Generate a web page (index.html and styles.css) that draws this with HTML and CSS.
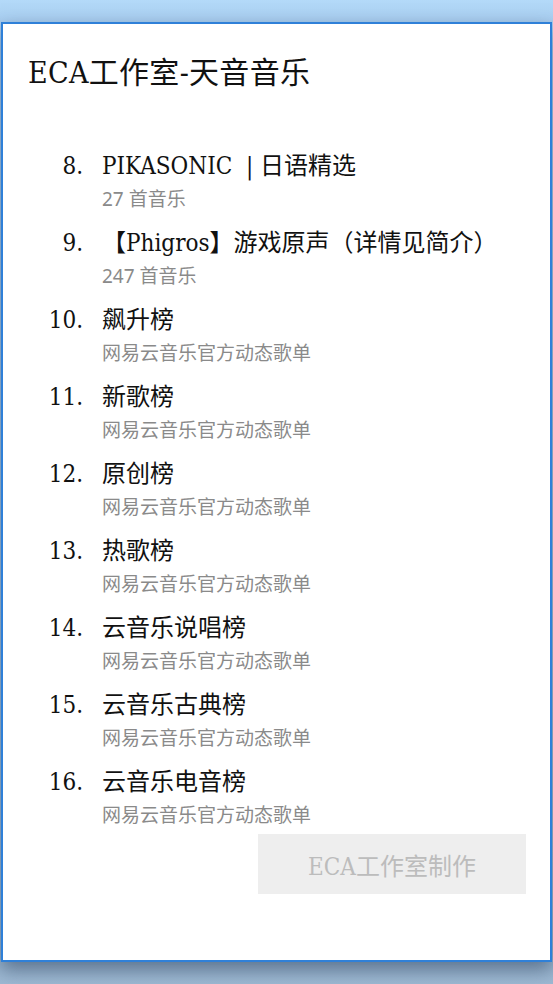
FILE: index.html
```html
<!DOCTYPE html>
<html lang="zh-CN">
<head>
    <meta charset="UTF-8">
    <meta name="viewport" content="width=device-width, initial-scale=1.0">
    <title>ECA工作室-天音音乐</title>
    <link rel="stylesheet" href="styles.css">
</head>
<body>

    <div class="window">
        <main class="panel">
            <h1 class="panel-title">ECA工作室-天音音乐</h1>

            <ul class="playlist">
                <li class="playlist-item">
                    <span class="num">8.</span>
                    <div class="info">
                        <div class="name">PIKASONIC&nbsp; | 日语精选</div>
                        <div class="desc">27 首音乐</div>
                    </div>
                </li>
                <li class="playlist-item">
                    <span class="num">9.</span>
                    <div class="info">
                        <div class="name">【Phigros】游戏原声（详情见简介）</div>
                        <div class="desc">247 首音乐</div>
                    </div>
                </li>
                <li class="playlist-item">
                    <span class="num">10.</span>
                    <div class="info">
                        <div class="name">飙升榜</div>
                        <div class="desc">网易云音乐官方动态歌单</div>
                    </div>
                </li>
                <li class="playlist-item">
                    <span class="num">11.</span>
                    <div class="info">
                        <div class="name">新歌榜</div>
                        <div class="desc">网易云音乐官方动态歌单</div>
                    </div>
                </li>
                <li class="playlist-item">
                    <span class="num">12.</span>
                    <div class="info">
                        <div class="name">原创榜</div>
                        <div class="desc">网易云音乐官方动态歌单</div>
                    </div>
                </li>
                <li class="playlist-item">
                    <span class="num">13.</span>
                    <div class="info">
                        <div class="name">热歌榜</div>
                        <div class="desc">网易云音乐官方动态歌单</div>
                    </div>
                </li>
                <li class="playlist-item">
                    <span class="num">14.</span>
                    <div class="info">
                        <div class="name">云音乐说唱榜</div>
                        <div class="desc">网易云音乐官方动态歌单</div>
                    </div>
                </li>
                <li class="playlist-item">
                    <span class="num">15.</span>
                    <div class="info">
                        <div class="name">云音乐古典榜</div>
                        <div class="desc">网易云音乐官方动态歌单</div>
                    </div>
                </li>
                <li class="playlist-item">
                    <span class="num">16.</span>
                    <div class="info">
                        <div class="name">云音乐电音榜</div>
                        <div class="desc">网易云音乐官方动态歌单</div>
                    </div>
                </li>
            </ul>

            <div class="footer">
                <button class="btn-credit">ECA工作室制作</button>
            </div>
        </main>
    </div>

</body>
</html>
```

FILE: styles.css
```css
/* --- Theme --- */
:root {
    --frame: #2f80d8;
    --text: #111111;
    --muted: #8a8a8a;
    --btn-bg: #eeeeee;
    --btn-text: #bcbcbc;
}

* {
    box-sizing: border-box;
    margin: 0;
    padding: 0;
}

body {
    font-family: "DejaVu Serif", "Noto Sans CJK SC", serif;
    font-stretch: condensed;
    background: linear-gradient(to bottom, #b4daf9 0, #a9cef0 22px, #9ab6d0 960px, #9fbad4 984px);
    color: var(--text);
    height: 984px;
    overflow: hidden;
}

.window {
    padding: 22px 1px 0 1px;
}

/* --- Panel --- */
.panel {
    height: 940px;
    background: #ffffff;
    border: 2px solid var(--frame);
    box-shadow: 0 8px 18px rgba(40, 60, 90, 0.55);
    display: flex;
    flex-direction: column;
}

.panel-title {
    font-size: 30px;
    font-weight: 400;
    line-height: 40px;
    padding: 29px 0 0 25px;
    letter-spacing: 0.3px;
}

/* --- Playlist --- */
.playlist {
    list-style: none;
    margin-top: 55px;
    display: flex;
    flex-direction: column;
    gap: 11px;
}

.playlist-item {
    display: flex;
    gap: 19px;
}

.num {
    width: 80px;
    text-align: right;
    font-size: 24px;
    line-height: 36px;
}

.name {
    font-size: 24px;
    line-height: 36px;
    white-space: nowrap;
}

.desc {
    font-family: "Noto Sans", "Noto Sans CJK SC", sans-serif;
    font-stretch: normal;
    font-size: 19px;
    line-height: 30px;
    color: var(--muted);
}

/* --- Footer --- */
.footer {
    display: flex;
    justify-content: flex-end;
    padding: 4px 24px 0 0;
}

.btn-credit {
    width: 268px;
    height: 60px;
    border: none;
    background: var(--btn-bg);
    color: var(--btn-text);
    font-family: inherit;
    font-stretch: inherit;
    font-size: 24px;
}
```
